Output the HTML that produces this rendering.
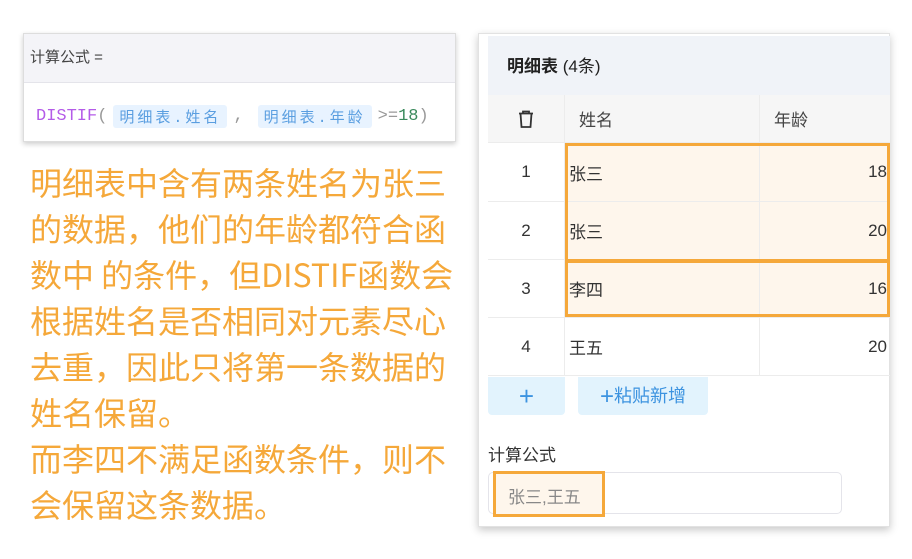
<!DOCTYPE html>
<html><head><meta charset="utf-8"><style>
*{margin:0;padding:0;box-sizing:border-box}
body{width:912px;height:559px;background:#fff;position:relative;overflow:hidden;font-family:"Liberation Sans","Noto Sans CJK SC",sans-serif}
.abs{position:absolute}
.fbox{left:23px;top:33px;width:433px;height:109px;border:1px solid #ddd;box-shadow:0 2px 5px rgba(0,0,0,.2);background:#fff}
.fhead{height:49px;background:#f4f4f8;border-bottom:1px solid #e4e4ea;font-size:15px;color:#444;padding:12px 0 0 6px}
.fline{position:absolute;top:71px;left:12px;font-family:"Liberation Mono","Noto Sans CJK SC",monospace;font-size:17px;color:#999;white-space:nowrap;display:flex;align-items:center}
.tag{background:#e8f3ff;color:#5a9ee0;border-radius:3px;padding:1px 6px;margin:0 6px;font-size:15px;letter-spacing:3px}
.desc{left:30px;top:159px;font-size:32px;line-height:46px;color:#f5a83a;white-space:nowrap;font-family:"Noto Sans CJK SC",sans-serif}
.panel{left:478px;top:33px;width:412px;height:494px;background:#fff;box-shadow:0 3px 8px rgba(0,0,0,.22);border:1px solid #e2e2e2}
.cell{position:absolute;font-size:17px;color:#333;border-right:1px solid #ececec;border-bottom:1px solid #ececec;display:flex;align-items:center}
</style></head><body>
<div class="abs fbox">
 <div class="fhead">计算公式 =</div>
 <div class="fline"><span style="color:#b45be8">DISTIF</span>(<span class="tag">明细表.姓名</span>,<span class="tag" style="margin-left:14px">明细表.年龄</span>&gt;=<span style="color:#3a8a5c">18</span>)</div>
</div>
<div class="abs desc">明细表中含有两条姓名为张三<br>的数据，他们的年龄都符合函<br>数中 的条件，但DISTIF函数会<br>根据姓名是否相同对元素尽心<br>去重，因此只将第一条数据的<br>姓名保留。<br>而李四不满足函数条件，则不<br>会保留这条数据。</div>
<div class="abs panel"></div>
<div class="abs" style="left:488px;top:36px;width:402px;height:59px;background:#f0f3f8;font-size:17px;color:#222;padding:16px 0 0 19px"><b>明细表</b> (4条)</div>
<div class="abs" style="left:488px;top:95px;width:402px;height:48px;background:#f6f6f6"></div>
<div class="cell" style="left:488px;top:95px;width:77px;height:48px;justify-content:center"><svg width="18" height="20" viewBox="0 0 18 20" fill="none" stroke="#333" stroke-width="1.8"><path d="M2 4.5h14M6 4V2.5h6V4M3.5 4.5l1 13.5h9l1-13.5"/></svg></div>
<div class="cell" style="left:565px;top:95px;width:195px;height:48px;padding-left:14px;color:#444">姓名</div>
<div class="cell" style="left:760px;top:95px;width:130px;height:48px;padding-left:14px;color:#444;border-right:none">年龄</div>
<div class="abs" style="left:565px;top:143px;width:325px;height:174px;background:#fef6ec"></div>
<div class="cell" style="left:488px;top:143px;width:77px;height:59px;justify-content:center">1</div>
<div class="cell" style="left:565px;top:143px;width:195px;height:59px;padding-left:4px">张三</div>
<div class="cell" style="left:760px;top:143px;width:130px;height:59px;justify-content:flex-end;padding-right:3px;border-right:none">18</div>
<div class="cell" style="left:488px;top:202px;width:77px;height:58px;justify-content:center">2</div>
<div class="cell" style="left:565px;top:202px;width:195px;height:58px;padding-left:4px">张三</div>
<div class="cell" style="left:760px;top:202px;width:130px;height:58px;justify-content:flex-end;padding-right:3px;border-right:none">20</div>
<div class="cell" style="left:488px;top:260px;width:77px;height:58px;justify-content:center">3</div>
<div class="cell" style="left:565px;top:260px;width:195px;height:58px;padding-left:4px">李四</div>
<div class="cell" style="left:760px;top:260px;width:130px;height:58px;justify-content:flex-end;padding-right:3px;border-right:none">16</div>
<div class="cell" style="left:488px;top:318px;width:77px;height:58px;justify-content:center">4</div>
<div class="cell" style="left:565px;top:318px;width:195px;height:58px;padding-left:4px">王五</div>
<div class="cell" style="left:760px;top:318px;width:130px;height:58px;justify-content:flex-end;padding-right:3px;border-right:none">20</div>
<div class="abs" style="left:565px;top:143px;width:325px;height:119px;border:3px solid #f5a83a"></div>
<div class="abs" style="left:565px;top:260px;width:325px;height:57px;border:3px solid #f5a83a"></div>
<div class="abs" style="left:488px;top:377px;width:77px;height:38px;background:#e2f3fd;border-radius:0 0 4px 4px;color:#3c93e0;font-size:26px;text-align:center;line-height:38px">+</div>
<div class="abs" style="left:578px;top:377px;width:130px;height:38px;background:#e2f3fd;border-radius:0 0 4px 4px;color:#3c93e0;font-size:18px;text-align:center;line-height:38px"><span style="font-size:24px;vertical-align:-2px">+</span>粘贴新增</div>
<div class="abs" style="left:488px;top:441px;font-size:17px;color:#333">计算公式</div>
<div class="abs" style="left:488px;top:472px;width:354px;height:42px;border:1px solid #e4e4ea;border-radius:5px"></div>
<div class="abs" style="left:493px;top:471px;width:112px;height:46px;border:3px solid #f5a83a;background:#fef6ec;font-size:17px;color:#888;padding:9px 0 0 12px">张三,王五</div>
</body></html>
